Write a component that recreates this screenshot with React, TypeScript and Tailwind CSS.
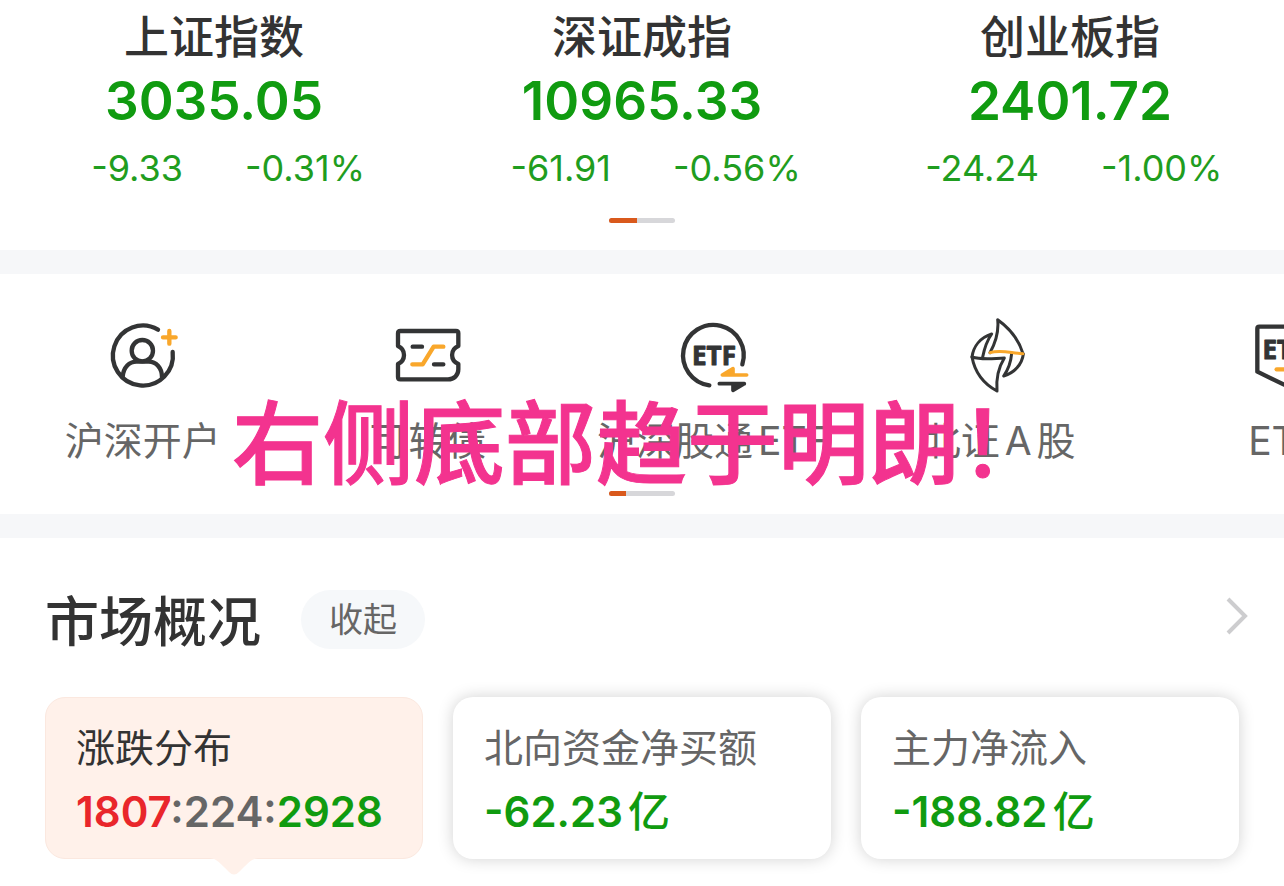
import type { ReactNode } from 'react';
import clsx from 'clsx';

const indices = [
  { name: '上证指数', value: '3035.05', change: '-9.33', percent: '-0.31%' },
  { name: '深证成指', value: '10965.33', change: '-61.91', percent: '-0.56%' },
  { name: '创业板指', value: '2401.72', change: '-24.24', percent: '-1.00%' },
];

const DARK = '#333435';
const ORANGE = '#f9a72b';

function Icon({ viewBox, children }: { viewBox: string; children: ReactNode }) {
  return (
    <svg
      viewBox={viewBox}
      className="w-20 h-20"
      fill="none"
      stroke={DARK}
      strokeWidth="13"
      strokeLinecap="round"
      strokeLinejoin="round"
      aria-hidden="true"
    >
      {children}
    </svg>
  );
}

function AccountIcon() {
  return (
    <Icon viewBox="41 15 240 240">
      <path d="M206 59A90 90 0 1 0 250 126" />
      <circle cx="159" cy="122" r="32" />
      <path d="M100 201C102 171 121 155 141 155H178C201 155 218 174 218 201" />
      <path d="M240 63V101M221 82H259" stroke={ORANGE} />
    </Icon>
  );
}

function BondIcon() {
  return (
    <Icon viewBox="25 15 240 240">
      <path d="M62 63H229Q236 63 236 70V108C211 119 211 151 236 162V178C236 196 223 208 205 208H62Q55 208 55 201V162C79 151 79 119 55 108V70Q55 63 62 63Z" />
      <path d="M99 110H127M163 163H191" />
      <path d="M98 163H129L162 110H191" stroke={ORANGE} />
    </Icon>
  );
}

function EtfConnectIcon() {
  return (
    <Icon viewBox="25 15 240 240">
      <path d="M134 226A91 91 0 1 1 233 163" />
      <text x="148" y="164" textAnchor="middle" fill={DARK} stroke={DARK} strokeWidth="3" fontFamily="Open Sans" fontWeight="700" fontSize="78">
        ETF
      </text>
      <path d="M173 195H246M173 195L205 176V195Z" stroke={ORANGE} fill={ORANGE} strokeWidth="11" />
      <path d="M164 221H239M239 221L205 241V221Z" fill={DARK} strokeWidth="11" />
    </Icon>
  );
}

function BeijingIcon() {
  return (
    <Icon viewBox="27 15 240 240">
      <g strokeWidth="9">
        <path d="M120 128C138 95 147 65 143 29C178 54 206 87 219 131" />
        <path d="M98 141C103 116 110 93 125 72C91 83 70 109 66 141" />
        <path d="M66 141C98 151 130 145 163 144C145 173 138 206 141 243C102 222 75 190 66 141Z" />
        <path d="M185 130C183 154 175 178 161 198C193 188 216 164 220 132" />
        <path d="M120 128C154 118 185 130 219 131" stroke={ORANGE} />
      </g>
    </Icon>
  );
}

function EtfShieldIcon() {
  return (
    <Icon viewBox="60 15 240 240">
      <path d="M106 50H254Q260 50 260 56V185L180 224L100 185V56Q100 50 106 50Z" />
      <text x="181" y="147" textAnchor="middle" fill={DARK} stroke={DARK} strokeWidth="3" fontFamily="Open Sans" fontWeight="700" fontSize="78">
        ETF
      </text>
      <path d="M158 178H202" stroke={ORANGE} />
    </Icon>
  );
}

const shortcuts = [
  { label: '沪深开户', icon: <AccountIcon /> },
  { label: '可转债', icon: <BondIcon /> },
  { label: '沪深股通ETF', icon: <EtfConnectIcon /> },
  { label: '北证A股', icon: <BeijingIcon /> },
  { label: 'ETF', icon: <EtfShieldIcon /> },
];

function Pager({ short = false }: { short?: boolean }) {
  return (
    <div className="mx-auto h-[5px] w-[66px] overflow-hidden rounded-full bg-[#d7d7da]">
      <div className={clsx('h-full bg-[#d9591c]', short ? 'w-[17px]' : 'w-7')} />
    </div>
  );
}

function StatCard({ title, active = false, children }: { title: string; active?: boolean; children: ReactNode }) {
  return (
    <button
      type="button"
      className={clsx(
        'relative h-[162px] rounded-[20px] pt-2 pl-[30px] text-left whitespace-nowrap',
        active
          ? 'border border-[#fbe8df] bg-[#fff1ea] text-[#333]'
          : 'border border-transparent bg-white text-[#666] shadow-[0_0_16px_rgba(0,0,0,0.18)]',
      )}
    >
      <div className="text-[39px] leading-[60px]">{title}</div>
      <div className="text-[42px] leading-[68px] font-semibold text-[#109b10]">{children}</div>
      {active && (
        <svg viewBox="0 0 48 18" className="absolute top-full left-1/2 h-[18px] w-12 -translate-x-1/2" aria-hidden="true">
          <path d="M0 0C7 1 10 5 19 14Q24 19 29 14C38 5 41 1 48 0Z" fill="#fff1ea" />
        </svg>
      )}
    </button>
  );
}

export default function App() {
  return (
    <main className="overflow-hidden bg-white font-['Inter','Noto_Sans_CJK_SC',sans-serif] text-[#333] [text-autospace:normal]">
      <section className="pt-[11px] pb-[27px]">
        <div className="grid grid-cols-3">
          {indices.map((item) => (
            <div key={item.name} className="text-center">
              <h2 className="text-[45px] leading-[54px] font-medium">{item.name}</h2>
              <p className="text-[53px] leading-[73px] font-semibold text-[#109b10]">{item.value}</p>
              <div className="grid grid-cols-2 gap-[62px] text-4xl leading-[60px] text-[#1f9d20]">
                <span className="text-right">{item.change}</span>
                <span className="text-left">{item.percent}</span>
              </div>
            </div>
          ))}
        </div>
        <div className="pt-5">
          <Pager />
        </div>
      </section>

      <div className="h-6 bg-[#f6f7f9]" />

      <section className="relative pt-[41px] pb-[18px]">
        <nav className="flex overflow-hidden">
          {shortcuts.map((item) => (
            <a
              key={item.label}
              href="#"
              className="flex w-2/9 shrink-0 flex-col items-center text-[39px] leading-[60px] whitespace-nowrap text-[#666]"
            >
              {item.icon}
              <span className="pt-4">{item.label}</span>
            </a>
          ))}
        </nav>
        <div className="pt-5">
          <Pager short />
        </div>
        <p className="pointer-events-none absolute inset-x-0 top-[115px] pl-[232px] text-[91px] leading-[110px] font-medium whitespace-nowrap text-[#f3338f] [-webkit-text-stroke:1px_#f3338f]">
          右侧底部趋于明朗！
        </p>
      </section>

      <div className="h-6 bg-[#f6f7f9]" />

      <section className="px-[45px] pt-[52px] pb-[27px]">
        <header className="flex h-[59px] items-center">
          <h1 className="pt-[6px] text-[54px] font-medium">市场概况</h1>
          <button type="button" className="ml-10 h-[59px] rounded-full bg-[#f6f8fa] px-7 text-[34px] leading-[59px] text-[#666]">
            收起
          </button>
          <button type="button" aria-label="更多" className="-mr-[10px] ml-auto pb-2">
            <svg viewBox="0 0 24 40" className="h-10 w-6" fill="none" stroke="#cdcdcf" strokeWidth="4" aria-hidden="true">
              <path d="M3 3L20 20L3 37" />
            </svg>
          </button>
        </header>

        <div className="grid grid-cols-3 gap-[30px] pt-12">
          <StatCard title="涨跌分布" active>
            <span className="text-[#e9262b]">1807</span>
            <span className="text-[#666]">:224:</span>
            <span>2928</span>
          </StatCard>
          <StatCard title="北向资金净买额">
            -62.23<span className="font-medium">亿</span>
          </StatCard>
          <StatCard title="主力净流入">
            -188.82<span className="font-medium">亿</span>
          </StatCard>
        </div>
      </section>
    </main>
  );
}
